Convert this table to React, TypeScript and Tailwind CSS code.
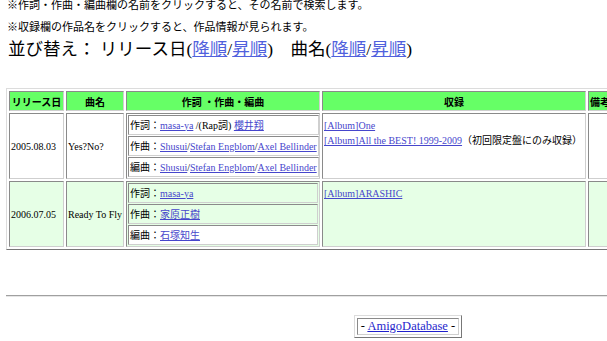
import type { ReactNode } from "react";

const jp = "font-['Noto_Sans_CJK_JP',sans-serif]";
const serif = "font-['Liberation_Serif','Noto_Sans_CJK_JP',serif]";
const inset =
  "border border-solid border-t-[#8a8a8a] border-l-[#8a8a8a] border-r-[#cfcfcf] border-b-[#cfcfcf]";
const outset =
  "border border-solid border-t-[#dcdcdc] border-l-[#dcdcdc] border-r-[#777] border-b-[#777]";
const link = "text-[#4646cc] underline";
const sortLink = "text-[#5060dd] underline";

type Credit = { label: string; body: ReactNode; tint?: boolean };

const songs: {
  date: string;
  title: string;
  tint?: boolean;
  credits: Credit[];
  albums: ReactNode[];
}[] = [
  {
    date: "2005.08.03",
    title: "Yes?No?",
    credits: [
      {
        label: "作詞",
        body: (
          <>
            <a className={link}>masa-ya</a> /(Rap詞) <a className={link}>櫻井翔</a>
          </>
        ),
      },
      {
        label: "作曲",
        body: (
          <>
            <a className={link}>Shusui</a>/<a className={link}>Stefan Engblom</a>/
            <a className={link}>Axel Bellinder</a>
          </>
        ),
      },
      {
        label: "編曲",
        body: (
          <>
            <a className={link}>Shusui</a>/<a className={link}>Stefan Engblom</a>/
            <a className={link}>Axel Bellinder</a>
          </>
        ),
      },
    ],
    albums: [
      <a className={link}>[Album]One</a>,
      <>
        <a className={link}>[Album]All the BEST! 1999-2009</a>
        <span className={jp}>（初回限定盤にのみ収録）</span>
      </>,
    ],
  },
  {
    date: "2006.07.05",
    title: "Ready To Fly",
    tint: true,
    credits: [
      { label: "作詞", body: <a className={link}>masa-ya</a>, tint: true },
      { label: "作曲", body: <a className={link}>家原正樹</a>, tint: true },
      { label: "編曲", body: <a className={link}>石塚知生</a> },
    ],
    albums: [<a className={link}>[Album]ARASHIC</a>],
  },
];

function CreditTable({ rows }: { rows: Credit[] }) {
  return (
    <table className="w-full border-separate border-spacing-[1px]">
      <tbody>
        {rows.map((r) => (
          <tr key={r.label}>
            <td
              className={`${inset} h-[20px] whitespace-nowrap px-px py-0 leading-[14px] ${
                r.tint ? "bg-[#e6ffe6]" : "bg-white"
              }`}
            >
              <span className={jp}>{r.label}：</span>
              {r.body}
            </td>
          </tr>
        ))}
      </tbody>
    </table>
  );
}

export default function App() {
  return (
    <div className="h-[341px] w-[607px] overflow-hidden bg-white">
      <div className={`w-[817px] pl-[6px] pr-[7px] text-black ${serif}`}>
        <p className={`${jp} -mt-[3px] pl-px text-[11px] leading-[14px]`}>
          ※作詞・作曲・編曲欄の名前をクリックすると、その名前で検索します。
        </p>
        <p className={`${jp} mt-[8px] pl-px text-[11px] leading-[14px]`}>
          ※収録欄の作品名をクリックすると、作品情報が見られます。
        </p>
        <p className="mt-[4px] pl-[2px] text-[17.5px] leading-[24px]">
          並び替え： リリース日(<a className={sortLink}>降順</a>/
          <a className={sortLink}>昇順</a>)　曲名(<a className={sortLink}>降順</a>/
          <a className={sortLink}>昇順</a>)
        </p>

        <table
          className={`${outset} mt-[27px] w-[804px] table-fixed border-separate border-spacing-[2px] text-[10px]`}
        >
          <thead>
            <tr className={`${jp} bg-[#66ff66] font-bold`}>
              <th className={`${inset} h-[20px] w-[55px] p-0 text-center`}>リリース日</th>
              <th className={`${inset} w-[58px] p-0 text-center`}>曲名</th>
              <th className={`${inset} w-[194px] p-0 text-center`}>作詞 ・作曲・編曲</th>
              <th className={`${inset} w-[264px] p-0 text-center`}>収録</th>
              <th className={`${inset} w-[219px] p-0 pl-px text-left`}>備考</th>
            </tr>
          </thead>
          <tbody>
            {songs.map((s) => {
              const bg = s.tint ? "bg-[#e6ffe6]" : "bg-white";
              return (
                <tr key={s.date}>
                  <td className={`${inset} ${bg} px-px align-middle`}>{s.date}</td>
                  <td className={`${inset} ${bg} whitespace-nowrap px-px align-middle`}>
                    {s.title}
                  </td>
                  <td className={`${inset} ${bg} p-0`}>
                    <CreditTable rows={s.credits} />
                  </td>
                  <td className={`${inset} ${bg} px-px pt-[5px] align-top leading-[14px]`}>
                    {s.albums.map((a, i) => (
                      <div key={i} className="whitespace-nowrap">
                        {a}
                      </div>
                    ))}
                  </td>
                  <td className={`${inset} ${bg}`}></td>
                </tr>
              );
            })}
          </tbody>
        </table>

        <div className="mt-[45px] h-0 border-t border-b border-t-[#a0a0a0] border-b-[#e6e6e6]" />

        <div className="mt-[18px] flex justify-center">
          <div className={`${outset} p-[2px]`}>
            <div className={`${inset} px-[3px] text-[12.5px] leading-[15px]`}>
              - <a className="text-[#1f1fcc] underline">AmigoDatabase</a> -
            </div>
          </div>
        </div>
      </div>
    </div>
  );
}
